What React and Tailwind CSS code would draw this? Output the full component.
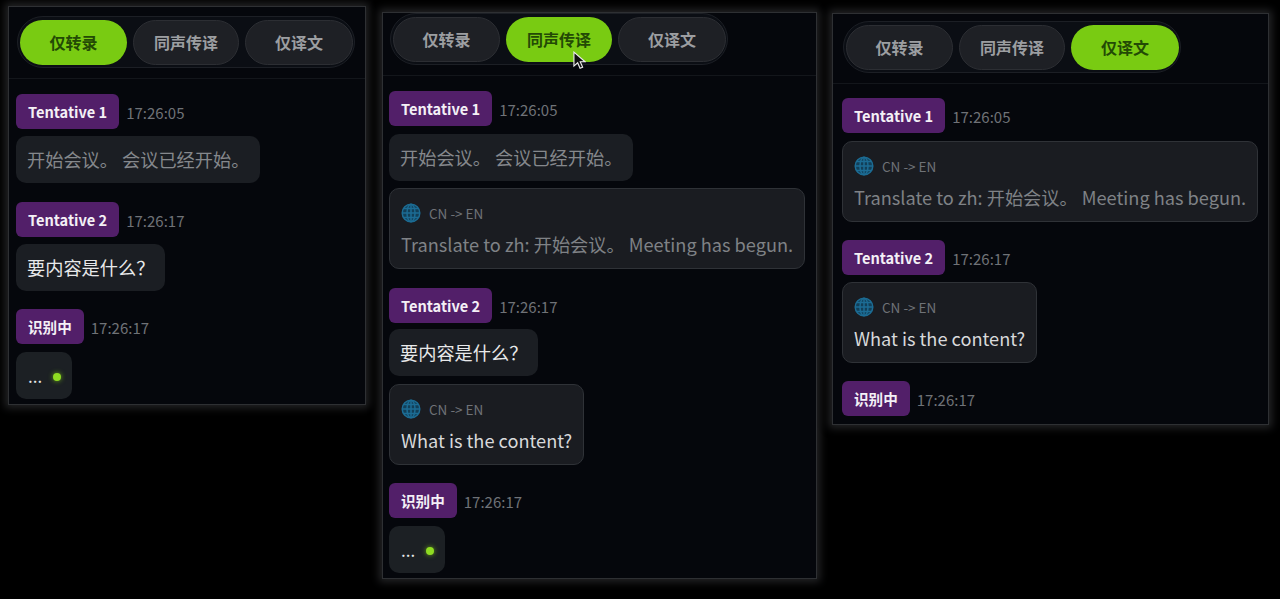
const font = { fontFamily: '"Noto Sans CJK SC", "Noto Sans", sans-serif' };

const TABS = [
  { text: '仅转录', width: 'w-[107px]' },
  { text: '同声传译', width: 'w-[106px]' },
  { text: '仅译文', width: 'w-[108px]' },
];

const Globe = () => (
  <svg viewBox="0 0 20 20" className="w-[20px] h-[20px] shrink-0" fill="none" stroke="#1c6c94" strokeWidth="1.5">
    <circle cx="10" cy="10" r="8.8" fill="#123f58" />
    <ellipse cx="10" cy="10" rx="4" ry="8.8" />
    <path d="M10 1.2v17.6M1.2 10h17.6M2.4 5.6h15.2M2.4 14.4h15.2" />
  </svg>
);

const Label = ({ text, time }) => (
  <div className="flex items-center gap-[7px]">
    <span className="h-[35px] px-[12px] rounded-[6px] bg-[#521f69] text-[#f4f0f6] text-[14.6px] font-bold flex items-center">{text}</span>
    <span className="text-[15px] text-[#6f7277] mt-[3px]">{time}</span>
  </div>
);

const Bubble = ({ dim, gap = 'mt-[7px]', children }) => (
  <div className={`self-start h-[47px] px-[11px] rounded-[10px] bg-[#1b1e23] text-[18.2px] flex items-center ${gap} ${dim ? 'text-[#85888c]' : 'text-[#e8e9ea]'}`}>
    {children}
  </div>
);

const Translated = ({ dim, gap = 'mt-[7px]', children }) => (
  <div className={`self-start h-[81px] px-[11px] pt-[14px] rounded-[10px] bg-[#1a1c21] border border-[#2f3237] ${gap} ${dim ? 'text-[#7f8286]' : 'text-[#d8d9db]'}`}>
    <div className="flex items-center gap-[8px] h-[20px]">
      <Globe />
      <span className="text-[13.5px] text-[#6f7277]">CN -&gt; EN</span>
    </div>
    <p className="text-[18.2px] mt-[5px] leading-[32px] whitespace-nowrap">{children}</p>
  </div>
);

const Pending = () => (
  <div className="self-start h-[47px] w-[56px] mt-[8px] pl-[12px] pr-[11px] rounded-[10px] bg-[#1c2024] text-[#e8e9ea] text-[17px] flex items-center justify-between">
    <span>...</span>
    <span className="w-[8px] h-[8px] mt-[2px] rounded-full bg-[#8fdc22] shadow-[0_0_5px_#6aa51a]" />
  </div>
);

const Tabs = ({ active, cursor }) => (
  <div className="relative w-[338px] h-[52px] flex items-center gap-[6px] pl-[2px] rounded-full border border-[#1c1f25] bg-[#0b0e14]">
    {TABS.map((tab, i) => (
      <div
        key={tab.text}
        className={`${tab.width} h-[45px] rounded-full flex items-center justify-center text-[16px] font-bold ${
          i === active ? 'bg-[#79cb12] text-[#234a05]' : 'bg-[#1e2025] border border-[#2c2e33] text-[#9c9ea1]'
        }`}
      >
        {tab.text}
      </div>
    ))}
    {cursor && (
      <svg viewBox="0 0 14 20" className="absolute left-[182px] top-[37px] w-[13px] h-[19px]">
        <path d="M1 1v15l4-3.6 2.6 6 2.8-1.2-2.6-5.8h5.2z" fill="#111" stroke="#eee" strokeWidth="1.2" />
      </svg>
    )}
  </div>
);

const Panel = ({ active, cursor, className, headClass, bodyClass, children }) => (
  <div className={`shrink-0 flex flex-col bg-[#05070c] border border-[#2e3033] shadow-[0_0_8px_3px_#242527] ${className}`}>
    <div className={`pb-[10px] border-b border-[#13161b] ${headClass}`}>
      <Tabs active={active} cursor={cursor} />
    </div>
    <div className={`flex flex-col pt-[15px] ${bodyClass}`}>{children}</div>
  </div>
);

export default function App() {
  return (
    <div style={font} className="w-[1280px] h-[599px] overflow-hidden bg-black flex items-start">
      <Panel active={0} className="w-[358px] h-[399px] ml-[8px] mt-[6px]" headClass="pt-[9px] pl-[8px]" bodyClass="px-[7px]">
        <Label text="Tentative 1" time="17:26:05" />
        <Bubble dim>开始会议。 会议已经开始。</Bubble>
        <div className="h-[19px]" />
        <Label text="Tentative 2" time="17:26:17" />
        <Bubble>要内容是什么？</Bubble>
        <div className="h-[18px]" />
        <Label text="识别中" time="17:26:17" />
        <Pending />
      </Panel>

      <Panel active={1} cursor className="w-[435px] h-[567px] ml-[16px] mt-[12px]" headClass="pl-[7px]" bodyClass="px-[6px]">
        <Label text="Tentative 1" time="17:26:05" />
        <Bubble dim gap="mt-[8px]">开始会议。 会议已经开始。</Bubble>
        <Translated dim>Translate to zh: 开始会议。 Meeting has begun.</Translated>
        <div className="h-[19px]" />
        <Label text="Tentative 2" time="17:26:17" />
        <Bubble gap="mt-[6px]">要内容是什么？</Bubble>
        <Translated gap="mt-[8px]">What is the content?</Translated>
        <div className="h-[18px]" />
        <Label text="识别中" time="17:26:17" />
        <Pending />
      </Panel>

      <Panel active={2} className="w-[437px] h-[412px] ml-[15px] mt-[13px]" headClass="pt-[7px] pl-[10px]" bodyClass="pl-[9px] -mt-px">
        <Label text="Tentative 1" time="17:26:05" />
        <Translated dim gap="mt-[8px]">Translate to zh: 开始会议。 Meeting has begun.</Translated>
        <div className="h-[18px]" />
        <Label text="Tentative 2" time="17:26:17" />
        <Translated>What is the content?</Translated>
        <div className="h-[18px]" />
        <Label text="识别中" time="17:26:17" />
      </Panel>
    </div>
  );
}
